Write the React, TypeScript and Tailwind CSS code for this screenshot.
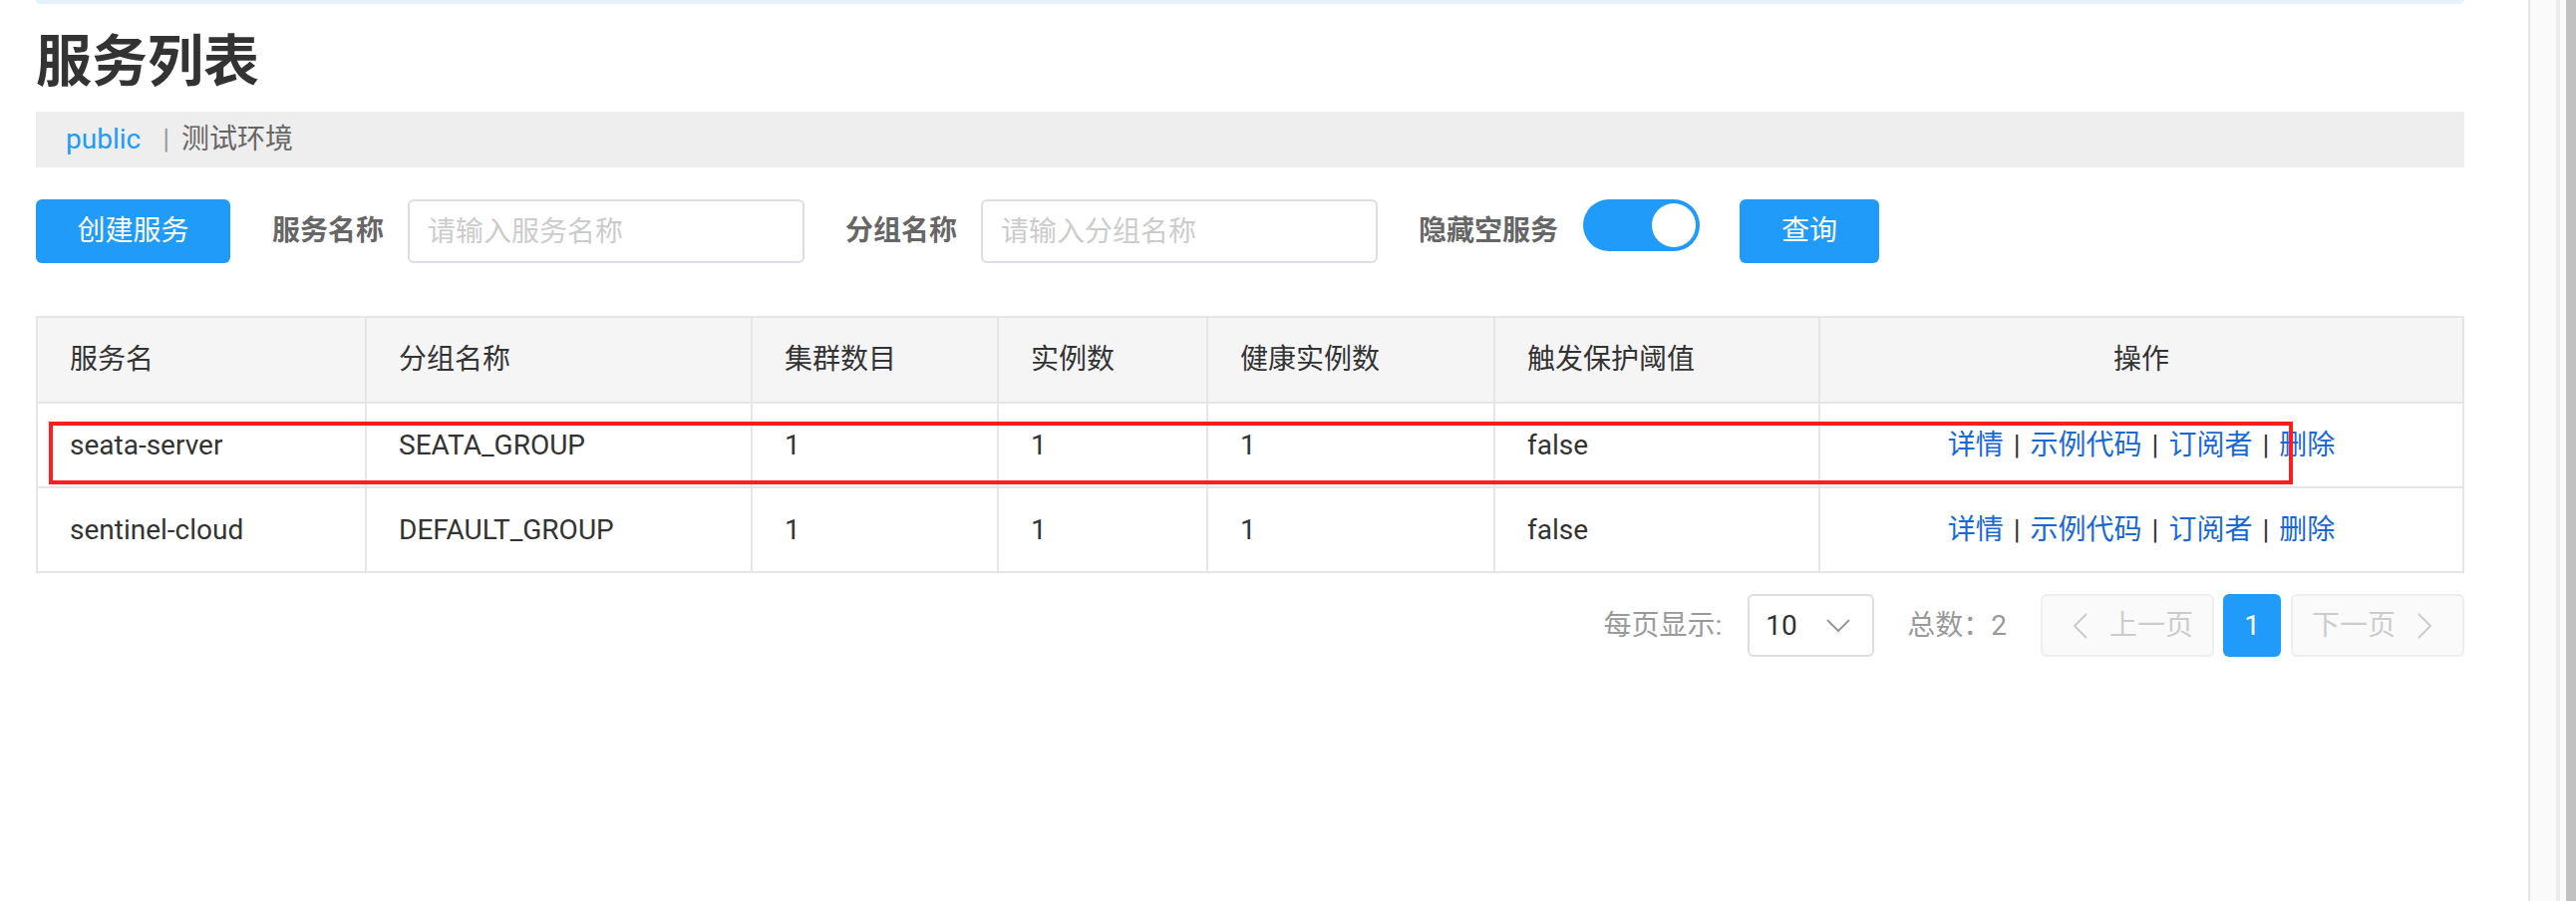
import React from 'react';

const rows = [
  { name: 'seata-server', group: 'SEATA_GROUP', clusters: 1, instances: 1, healthy: 1, threshold: 'false' },
  { name: 'sentinel-cloud', group: 'DEFAULT_GROUP', clusters: 1, instances: 1, healthy: 1, threshold: 'false' },
];

const headers = ['服务名', '分组名称', '集群数目', '实例数', '健康实例数', '触发保护阈值'];

function Sep() {
  return <span className="mx-[10px] text-[#333]">|</span>;
}

export default function App() {
  return (
    <div className="flex h-[904px] w-[2584px] overflow-hidden bg-white font-['Roboto','Noto_Sans_CJK_SC',sans-serif] text-[28px] text-[#333]">
      <main className="flex-1 pl-[36px] pr-[64px]">
        <div className="h-[4px] rounded-b-[6px] bg-[#e6f2fd]" />
        <h1 className="mt-[30px] text-[56px] font-bold leading-[56px] text-[#333]">服务列表</h1>

        {/* breadcrumb */}
        <div className="mt-[22px] flex h-[56px] items-center bg-[#eeeeee] pl-[30px] leading-none">
          <span className="text-[#209bfa]">public</span>
          <span className="ml-[22px] mr-[12px] text-[#999]">|</span>
          <span className="text-[#666]">测试环境</span>
        </div>

        {/* toolbar */}
        <div className="mt-[32px] flex h-[64px] items-center">
          <button className="h-[64px] w-[195px] rounded-[6px] bg-[#209bfa] text-white">创建服务</button>
          <span className="ml-[42px] font-bold text-[#666]">服务名称</span>
          <input
            className="ml-[24px] h-[64px] w-[398px] rounded-[6px] border-2 border-[#dcdee3] px-[18px] outline-none placeholder:text-[#ccc]"
            placeholder="请输入服务名称"
          />
          <span className="ml-[41px] font-bold text-[#666]">分组名称</span>
          <input
            className="ml-[24px] h-[64px] w-[398px] rounded-[6px] border-2 border-[#dcdee3] px-[18px] outline-none placeholder:text-[#ccc]"
            placeholder="请输入分组名称"
          />
          <span className="ml-[41px] font-bold text-[#666]">隐藏空服务</span>
          <div className="relative ml-[25px] h-[52px] w-[117px] self-start rounded-full bg-[#209bfa]">
            <div className="absolute right-[4px] top-[4px] h-[44px] w-[44px] rounded-full bg-white" />
          </div>
          <button className="ml-[40px] h-[64px] w-[140px] rounded-[6px] bg-[#209bfa] text-white">查询</button>
        </div>

        {/* table */}
        <div className="relative mt-[53px]">
          <table className="w-full table-fixed border-collapse border-2 border-[#e6e6e6]">
            <colgroup>
              <col className="w-[330px]" />
              <col className="w-[387px]" />
              <col className="w-[247px]" />
              <col className="w-[210px]" />
              <col className="w-[288px]" />
              <col className="w-[326px]" />
              <col />
            </colgroup>
            <thead>
              <tr>
                {headers.map((h) => (
                  <th key={h} className="h-[86px] border-2 border-[#e6e6e6] bg-[#f5f5f6] px-[32px] text-left font-normal">
                    {h}
                  </th>
                ))}
                <th className="h-[86px] border-2 border-[#e6e6e6] bg-[#f5f5f6] px-[32px] text-center font-normal">操作</th>
              </tr>
            </thead>
            <tbody>
              {rows.map((r) => (
                <tr key={r.name}>
                  <td className="h-[85px] border-2 border-[#e6e6e6] px-[32px]">{r.name}</td>
                  <td className="h-[85px] border-2 border-[#e6e6e6] px-[32px]">{r.group}</td>
                  <td className="h-[85px] border-2 border-[#e6e6e6] px-[32px]">{r.clusters}</td>
                  <td className="h-[85px] border-2 border-[#e6e6e6] px-[32px]">{r.instances}</td>
                  <td className="h-[85px] border-2 border-[#e6e6e6] px-[32px]">{r.healthy}</td>
                  <td className="h-[85px] border-2 border-[#e6e6e6] px-[32px]">{r.threshold}</td>
                  <td className="h-[85px] border-2 border-[#e6e6e6] px-[32px] text-center text-[#1868d6]">
                    <span>详情</span>
                    <Sep />
                    <span>示例代码</span>
                    <Sep />
                    <span>订阅者</span>
                    <Sep />
                    <span>删除</span>
                  </td>
                </tr>
              ))}
            </tbody>
          </table>
          {/* annotation box */}
          <div className="pointer-events-none absolute left-[13px] top-[106px] h-[63px] w-[2251px] border-4 border-[#ff1e1e]" />
        </div>

        {/* pagination */}
        <div className="mt-[21px] flex h-[63px] items-center justify-end text-[#999]">
          <span>每页显示:</span>
          <div className="ml-[26px] flex h-[63px] w-[127px] items-center rounded-[6px] border-2 border-[#dcdee3] pl-[16px] text-[#333]">
            <span>10</span>
            <svg className="ml-auto mr-[22px]" width="24" height="14" viewBox="0 0 24 14" fill="none">
              <polyline points="1,1 12,12 23,1" stroke="#999" strokeWidth="2" />
            </svg>
          </div>
          <span className="ml-[33px]">总数：2</span>
          <div className="ml-[34px] flex h-[63px] w-[174px] items-center rounded-[6px] border-2 border-[#eeeeee] bg-[#fafafa] pl-[31px] text-[#ccc]">
            <svg width="14" height="26" viewBox="0 0 14 26" fill="none">
              <polyline points="13,1 1,13 13,25" stroke="#ccc" strokeWidth="2" />
            </svg>
            <span className="ml-[22px]">上一页</span>
          </div>
          <div className="ml-[9px] flex h-[63px] w-[58px] items-center justify-center rounded-[6px] bg-[#209bfa] text-white">1</div>
          <div className="ml-[10px] flex h-[63px] w-[174px] items-center rounded-[6px] border-2 border-[#eeeeee] bg-[#fafafa] pl-[19px] text-[#ccc]">
            <span>下一页</span>
            <svg className="ml-[22px]" width="14" height="26" viewBox="0 0 14 26" fill="none">
              <polyline points="1,1 13,13 1,25" stroke="#ccc" strokeWidth="2" />
            </svg>
          </div>
        </div>
      </main>

      {/* right rail */}
      <aside className="flex w-[48px] shrink-0">
        <div className="w-[2px] bg-[#e6e6e6]" />
        <div className="w-[26px] bg-[#fafafa]" />
        <div className="w-[4px] bg-[#ececec]" />
        <div className="w-[6px] bg-[#fafafa]" />
        <div className="w-[10px] bg-[#c1c1c1]" />
      </aside>
    </div>
  );
}
